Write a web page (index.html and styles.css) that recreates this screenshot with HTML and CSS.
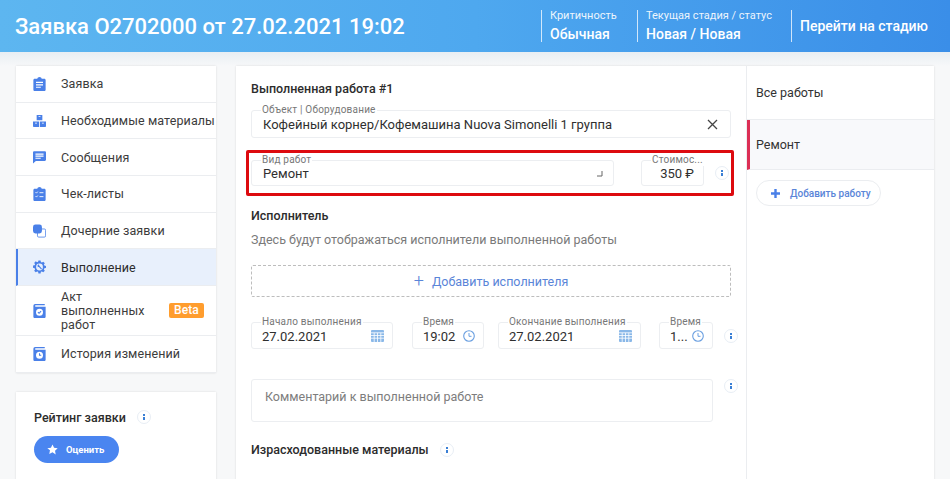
FILE: index.html
```html
<!DOCTYPE html>
<html lang="ru">
<head>
    <meta charset="utf-8">
    <title>Заявка O2702000</title>
    <link rel="stylesheet" href="styles.css">
</head>
<body>
    <header class="topbar">
        <h1 class="topbar-title">Заявка O2702000 от 27.02.2021 19:02</h1>
        <div class="topbar-info info-level">
            <span class="info-label">Критичность</span>
            <span class="info-value">Обычная</span>
        </div>
        <div class="topbar-info info-stage">
            <span class="info-label">Текущая стадия / статус</span>
            <span class="info-value">Новая / Новая</span>
        </div>
        <div class="topbar-info info-action">Перейти на стадию</div>
    </header>

    <div class="page">
        <aside class="sidebar">
            <nav class="card menu">
                <a class="menu-item">
                    <svg class="menu-icon" viewBox="0 0 14 16"><path fill="#4a80e8" d="M1.5 2H4.5C4.7.8 5.7 0 7 0s2.300.8 2.500 2h3c.8 0 1.500.7 1.500 1.500v11c0 .8-.7 1.500-1.500 1.500h-11C.7 16 0 15.300 0 14.500v-11C0 2.700.7 2 1.500 2z"/><path fill="#fff" d="M3 5.500h8v1.300H3zM3 8.300h8v1.300H3zM3 11.100h5.500v1.300H3z"/></svg>
                    <span>Заявка</span>
                </a>
                <a class="menu-item">
                    <svg class="menu-icon" viewBox="0 0 16 15"><path fill="#4a80e8" d="M4.500 0h7v6.500h-7zM0 8h7.500v7H1a1 1 0 0 1-1-1zM8.500 8H16v6a1 1 0 0 1-1 1H8.500z"/><path fill="#fff" d="M6.800 1.600h2.400v1H6.800zM2.500 9.500h2.400v1H2.500zM11 9.500h2.400v1H11z"/></svg>
                    <span>Необходимые материалы</span>
                </a>
                <a class="menu-item">
                    <svg class="menu-icon" viewBox="0 0 16 16"><path fill="#4a80e8" d="M1.500 1h13c.8 0 1.500.7 1.500 1.500v9c0 .8-.7 1.500-1.500 1.500H3.500L0 16V2.500C0 1.700.7 1 1.500 1z"/><path fill="#fff" d="M3 3.800h10v1.300H3zM3 6.300h10v1.300H3zM3 8.800h6.500v1.300H3z"/></svg>
                    <span>Сообщения</span>
                </a>
                <a class="menu-item">
                    <svg class="menu-icon" viewBox="0 0 14 16"><path fill="#4a80e8" d="M1.500 2H4.500C4.700.8 5.700 0 7 0s2.300.8 2.500 2h3c.8 0 1.500.7 1.500 1.500v11c0 .8-.7 1.500-1.500 1.500h-11C.7 16 0 15.300 0 14.500v-11C0 2.700.7 2 1.500 2z"/><path fill="none" stroke="#fff" d="M2.500 6l1 1 1.500-1.700M2.500 10.500l1 1 1.500-1.700M7 6.500h4.500M7 11h4.500"/></svg>
                    <span>Чек-листы</span>
                </a>
                <a class="menu-item">
                    <svg class="menu-icon" viewBox="0 0 16 16"><rect x="5.500" y="5.500" width="10" height="10" rx="1.500" fill="#fff" stroke="#4a80e8"/><rect x="0" y="0" width="11" height="11" rx="3" fill="#4a80e8"/></svg>
                    <span>Дочерние заявки</span>
                </a>
                <a class="menu-item active">
                    <svg class="menu-icon" viewBox="0 0 16 16"><path fill="#4a80e8" d="M6.600 0h2.800l.4 2.100 1.300.6 1.800-1.200 2 2-1.200 1.800.6 1.300 2.100.4v2.800l-2.100.4-.6 1.300 1.200 1.800-2 2-1.800-1.200-1.300.6-.4 2.100H6.600l-.4-2.100-1.300-.6-1.800 1.200-2-2 1.200-1.800-.6-1.300L-.4 9.400V6.600l2.100-.4.6-1.300-1.200-1.800 2-2 1.800 1.200 1.300-.6z" transform="translate(.4 0) scale(.95)"/><circle cx="8" cy="8" r="4.200" fill="#e8f0fc"/><path fill="none" stroke="#4a80e8" stroke-width="1.400" d="M6 5.500l4.500 5M6.500 8a2 2 0 0 1 1-2.500"/></svg>
                    <span>Выполнение</span>
                </a>
                <a class="menu-item menu-item-tall">
                    <svg class="menu-icon" viewBox="0 0 14 16"><path fill="#4a80e8" d="M2 0h11v1.500H2.500a.8.8 0 0 0 0 1.500H14v11.500c0 .8-.7 1.500-1.500 1.500h-11C.7 16 0 15.300 0 14.500V2a2 2 0 0 1 2-2z"/><circle cx="7" cy="9.300" r="4" fill="#fff"/><path fill="none" stroke="#4a80e8" stroke-width="1.300" d="M5.200 9.300l1.300 1.300 2.300-2.500"/></svg>
                    <span class="menu-text-wrap">Акт выполненных работ</span>
                    <span class="beta">Beta</span>
                </a>
                <a class="menu-item">
                    <svg class="menu-icon" viewBox="0 0 14 16"><path fill="#4a80e8" d="M2 0h11v1.500H2.500a.8.8 0 0 0 0 1.500H14v11.500c0 .8-.7 1.500-1.500 1.500h-11C.7 16 0 15.300 0 14.500V2a2 2 0 0 1 2-2z"/><circle cx="7" cy="9.300" r="4" fill="#fff"/><path fill="none" stroke="#4a80e8" stroke-width="1.200" d="M7 7v2.500h2"/></svg>
                    <span>История изменений</span>
                </a>
            </nav>

            <section class="card rating">
                <div class="rating-title">
                    <span>Рейтинг заявки</span>
                    <i class="hint"><b></b></i>
                </div>
                <button class="rate-btn">
                    <svg width="11" height="11" viewBox="0 0 24 24"><path fill="#fff" d="M12 1l3.400 7.300 7.900 1-5.800 5.500 1.500 7.900L12 18l-7 3.700 1.500-7.900L.7 9.300l7.900-1z"/></svg>
                    Оценить
                </button>
            </section>
        </aside>

        <main class="card work">
            <div class="work-form">
                <h2 class="section-title">Выполненная работа #1</h2>

                <div class="field field-object">
                    <label>Объект | Оборудование</label>
                    <span class="field-value">Кофейный корнер/Кофемашина Nuova Simonelli 1 группа</span>
                    <svg class="clear-icon" width="11" height="11" viewBox="0 0 11 11"><path stroke="#444" stroke-width="1.300" d="M1 1l9 9M10 1l-9 9"/></svg>
                </div>

                <div class="highlight">
                    <div class="field field-grow">
                        <label>Вид работ</label>
                        <span class="field-value">Ремонт</span>
                        <svg class="corner-icon" width="7" height="7" viewBox="0 0 7 7"><path fill="none" stroke="#666" d="M6 1v5H1"/></svg>
                    </div>
                    <div class="field field-cost">
                        <label>Стоимос...</label>
                        <span class="field-value">350 ₽</span>
                    </div>
                    <i class="hint"><b></b></i>
                </div>

                <h3 class="section-title performer-title">Исполнитель</h3>
                <p class="performer-note">Здесь будут отображаться исполнители выполненной работы</p>
                <div class="add-performer"><span class="plus">+</span> Добавить исполнителя</div>

                <div class="dates">
                    <div class="field field-date">
                        <label>Начало выполнения</label>
                        <span class="field-value">27.02.2021</span>
                        <svg class="date-icon" width="13" height="13" viewBox="0 0 13 13"><path fill="#8ab8e8" d="M1 1h11a1 1 0 0 1 1 1v10a1 1 0 0 1-1 1H1a1 1 0 0 1-1-1V2a1 1 0 0 1 1-1z"/><path stroke="#fff" stroke-width=".8" d="M0 3.800h13M0 6.500h13M0 9.200h13M3.200 3.800V13M6.500 3.800V13M9.800 3.800V13"/></svg>
                    </div>
                    <div class="field field-time">
                        <label>Время</label>
                        <span class="field-value">19:02</span>
                        <svg class="date-icon" width="12" height="12" viewBox="0 0 12 12"><circle cx="6" cy="6" r="5.300" fill="none" stroke="#6a9fe0" stroke-width="1.100"/><path fill="none" stroke="#6a9fe0" d="M6 3v3.300h2.500"/></svg>
                    </div>
                    <div class="field field-date field-date-end">
                        <label>Окончание выполнения</label>
                        <span class="field-value">27.02.2021</span>
                        <svg class="date-icon" width="13" height="13" viewBox="0 0 13 13"><path fill="#8ab8e8" d="M1 1h11a1 1 0 0 1 1 1v10a1 1 0 0 1-1 1H1a1 1 0 0 1-1-1V2a1 1 0 0 1 1-1z"/><path stroke="#fff" stroke-width=".8" d="M0 3.800h13M0 6.500h13M0 9.200h13M3.200 3.800V13M6.500 3.800V13M9.800 3.800V13"/></svg>
                    </div>
                    <div class="field field-time-end">
                        <label>Время</label>
                        <span class="field-value">1...</span>
                        <svg class="date-icon" width="12" height="12" viewBox="0 0 12 12"><circle cx="6" cy="6" r="5.300" fill="none" stroke="#6a9fe0" stroke-width="1.100"/><path fill="none" stroke="#6a9fe0" d="M6 3v3.300h2.500"/></svg>
                    </div>
                    <i class="hint"><b></b></i>
                </div>

                <div class="comment-row">
                    <div class="comment">Комментарий к выполненной работе</div>
                    <i class="hint"><b></b></i>
                </div>

                <div class="materials-title">
                    <h3 class="section-title">Израсходованные материалы</h3>
                    <i class="hint"><b></b></i>
                </div>
            </div>

            <div class="work-list">
                <div class="work-tab">Все работы</div>
                <div class="work-tab selected">Ремонт</div>
                <button class="add-work">
                    <svg width="11" height="11" viewBox="0 0 11 11"><path stroke="#4a80e8" stroke-width="2.400" d="M5.500 1v9M1 5.500h9"/></svg>
                    Добавить работу
                </button>
            </div>
        </main>
    </div>
</body>
</html>
```

FILE: styles.css
```css
* {
    box-sizing: border-box;
}
html, body {
    height: 100%;
}
body {
    margin: 0;
    overflow: hidden;
    background: #f7f8f9;
    color: #333;
    font-family: Roboto, "Liberation Sans", sans-serif;
    font-size: 13px;
}
.topbar {
    display: flex;
    align-items: center;
    height: 52px;
    padding-left: 15px;
    background: linear-gradient(90deg, #5db6f0 0%, #4ea8ef 50%, #3a8ee8 100%);
    color: #fff;
}
.topbar-title {
    flex: 1;
    margin: 0;
    font-size: 22px;
    font-weight: 500;
}
.topbar-info {
    display: flex;
    flex-direction: column;
    justify-content: center;
    height: 32px;
    border-left: 1px solid rgba(255, 255, 255, 0.75);
    padding-left: 8px;
}
.info-level {
    width: 96px;
}
.info-stage {
    width: 154px;
}
.info-action {
    width: 159px;
    font-size: 14px;
    font-weight: 500;
}
.info-label {
    font-size: 11px;
    line-height: 15px;
    opacity: 0.9;
}
.info-value {
    font-size: 14px;
    font-weight: 500;
    line-height: 20px;
    margin-top: 1px;
}

.page {
    display: flex;
    align-items: flex-start;
    gap: 20px;
    height: 427px;
    padding: 14px 16px 0;
    background: linear-gradient(180deg, #e8eef3 0, #f7f8f9 14px);
}
.card {
    background: #fff;
    box-shadow: 0 0 2px rgba(0, 0, 0, 0.12);
}
.sidebar {
    flex: none;
    width: 200px;
}

.menu-item {
    display: flex;
    align-items: center;
    height: 36.700px;
    padding-left: 17px;
    border-bottom: 1px solid #ebedf0;
    color: #3c3c3c;
    font-size: 12.500px;
    letter-spacing: 0.1px;
}
.menu-icon {
    flex: none;
    width: 13px;
    height: 14px;
    margin-right: 15px;
}
.menu-item.active {
    border-left: 2px solid #4a80e8;
    padding-left: 15px;
    background: #e8f0fc;
    color: #2c2c2c;
}
.menu-item-tall {
    height: 50px;
}
.menu-text-wrap {
    width: 105px;
    line-height: 14px;
}
.beta {
    margin-left: 3px;
    padding: 0 5px;
    border-radius: 2px;
    background: #ff9d2e;
    color: #fff;
    font-size: 12px;
    font-weight: 500;
    line-height: 15px;
}

.rating {
    height: 120px;
    margin-top: 19px;
    padding: 18px;
}
.rating-title {
    display: flex;
    align-items: center;
    gap: 11px;
    color: #2c2c2c;
    font-size: 12.500px;
    font-weight: 500;
}
.rate-btn {
    display: flex;
    align-items: center;
    gap: 8px;
    width: 85px;
    height: 27px;
    margin-top: 11px;
    padding-left: 13px;
    border: 0;
    border-radius: 14px;
    background: #4a85f0;
    color: #fff;
    font-family: inherit;
    font-size: 9.500px;
    font-weight: 700;
}

.hint {
    display: flex;
    flex: none;
    align-items: center;
    justify-content: center;
    width: 14px;
    height: 14px;
    border: 1px solid #e8eef5;
    border-radius: 50%;
    background: #fff;
}
.hint b {
    width: 2px;
    height: 6px;
    background: linear-gradient(#3a7fd5 0 2px, transparent 2px 3px, #3a7fd5 3px);
}

.work {
    display: flex;
    flex: none;
    width: 698px;
    height: 420px;
}
.work-form {
    flex: none;
    width: 510px;
    padding: 15px 0 0 15px;
}
.section-title {
    margin: 0;
    color: #2c2c2c;
    font-size: 12.500px;
    font-weight: 500;
    line-height: 16px;
}

.field {
    position: relative;
    display: flex;
    align-items: center;
    height: 27px;
    padding-left: 11px;
    border: 1px solid #eceef1;
    border-radius: 3px;
    background: #fff;
}
.field label {
    position: absolute;
    top: -7px;
    left: 9px;
    padding: 0 1px;
    background: #fff;
    color: #777;
    font-size: 10px;
    letter-spacing: 0.2px;
    line-height: 12px;
    white-space: nowrap;
}
.field-value {
    flex: 1;
    padding-top: 1px;
    color: #2f2f2f;
    font-size: 13px;
    white-space: nowrap;
}
.field-object {
    width: 480px;
    height: 28px;
    margin-top: 13px;
}
.clear-icon {
    margin-right: 12px;
}
.highlight {
    display: flex;
    align-items: center;
    width: 488px;
    height: 46px;
    margin: 12px 0 0 -5px;
    padding-left: 2px;
    border: 3px solid #dd0a0f;
    border-radius: 2px;
}
.field-grow {
    width: 363px;
    height: 26px;
}
.corner-icon {
    margin-right: 10px;
}
.field-cost {
    width: 63px;
    height: 26px;
    margin-left: 27px;
    padding: 0 9px 0 0;
    text-align: right;
}
.highlight .hint {
    margin-left: 11px;
}

.performer-title {
    margin-top: 12px;
}
.performer-note {
    margin: 8px 0 0;
    color: #7a7a7a;
    font-size: 12.500px;
    line-height: 16px;
}
.add-performer {
    display: flex;
    align-items: center;
    justify-content: center;
    gap: 8px;
    width: 480px;
    height: 32px;
    margin-top: 17px;
    border: 1px dashed #bdbdbd;
    border-radius: 2px;
    color: #5a85d8;
    font-size: 12.500px;
}
.plus {
    font-size: 18px;
    font-weight: 300;
    line-height: 18px;
}

.dates {
    display: flex;
    align-items: center;
    margin-top: 25px;
}
.dates .field-value {
    padding-right: 4px;
}
.date-icon {
    flex: none;
    margin-right: 8px;
}
.field-date {
    width: 142px;
    padding-left: 10px;
}
.field-time {
    width: 72px;
    margin-left: 19px;
    padding-left: 10px;
}
.field-date-end {
    width: 143px;
    margin-left: 14px;
}
.field-time-end {
    width: 54px;
    margin-left: 18px;
    padding-left: 10px;
}
.dates .hint {
    margin-left: 11px;
}

.comment-row {
    display: flex;
    align-items: flex-start;
    margin-top: 30px;
}
.comment {
    width: 462px;
    height: 43px;
    padding: 9px 13px;
    border: 1px solid #eceef1;
    border-radius: 3px;
    color: #7d7d7d;
    font-size: 12.500px;
}
.comment-row .hint {
    margin-left: 11px;
}

.materials-title {
    display: flex;
    align-items: center;
    gap: 11px;
    margin-top: 20px;
}

.work-list {
    flex: none;
    width: 188px;
    border-left: 1px solid #ebedf0;
    margin-left: 0;
}
.work-tab {
    display: flex;
    align-items: center;
    height: 54px;
    padding-left: 9px;
    border-bottom: 1px solid #ebedf0;
    color: #333;
    font-size: 12.500px;
}
.work-tab.selected {
    height: 50px;
    border-left: 3px solid #dc2f55;
    padding-left: 6px;
    background: #f8f9fb;
}
.add-work {
    display: flex;
    align-items: center;
    gap: 9px;
    width: 125px;
    height: 26px;
    margin: 10px 0 0 9px;
    padding-left: 13px;
    border: 1px solid #ebedf0;
    border-radius: 13px;
    background: #fff;
    color: #5a85d8;
    font-family: inherit;
    font-size: 10px;
    font-weight: 500;
    white-space: nowrap;
}
```
